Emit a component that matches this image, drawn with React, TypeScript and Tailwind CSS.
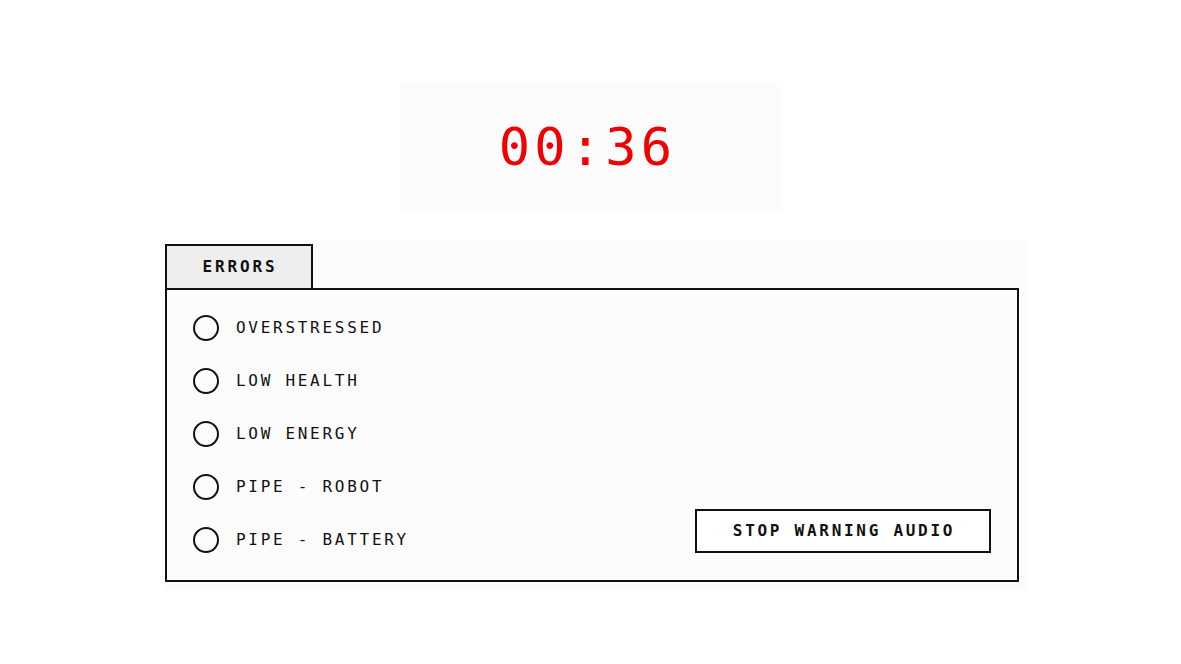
import React from "react";

const mono = { fontFamily: '"DejaVu Sans Mono", "Liberation Mono", monospace' };

const errors = ["OVERSTRESSED", "LOW HEALTH", "LOW ENERGY", "PIPE - ROBOT", "PIPE - BATTERY"];

export default function App() {
  return (
    <div className="w-[1181px] h-[664px] bg-white flex flex-col items-center" style={mono}>
      <div className="mt-[82px] w-[382px] h-[130px] bg-[#fdfcfc] flex items-center justify-center">
        <span className="text-[52px] leading-none tracking-[0.08em] text-[#f00000] mr-[6px]">00:36</span>
      </div>
      <div className="mt-[28px] w-[862px] h-[350px] bg-[#fcfcfc] pl-0 pt-[4px] self-start ml-[165px]">
        <div className="w-[148px] h-[44px] border-2 border-b-0 border-[#111] bg-[#eeeeee] flex items-center justify-center">
          <span className="text-[16px] font-bold tracking-[0.18em] text-[#111] ml-[2px]">ERRORS</span>
        </div>
        <div className="w-[854px] h-[294px] border-2 border-[#111] bg-[#fcfcfc] flex items-start justify-between pl-[26px] pr-[26px] pt-[25px]">
          <div className="flex flex-col gap-[28px]">
            {errors.map((e) => (
              <div key={e} className="flex items-center h-[25px]">
                <div className="w-[26px] h-[26px] rounded-full border-2 border-[#111]" />
                <span className="ml-[17px] text-[16px] tracking-[0.17em] text-[#111]">{e}</span>
              </div>
            ))}
          </div>
          <button className="mt-[194px] w-[296px] h-[44px] border-2 border-[#111] bg-white flex items-center justify-center">
            <span className="text-[16px] font-bold tracking-[0.17em] text-[#111] ml-[2px]">STOP WARNING AUDIO</span>
          </button>
        </div>
      </div>
    </div>
  );
}
